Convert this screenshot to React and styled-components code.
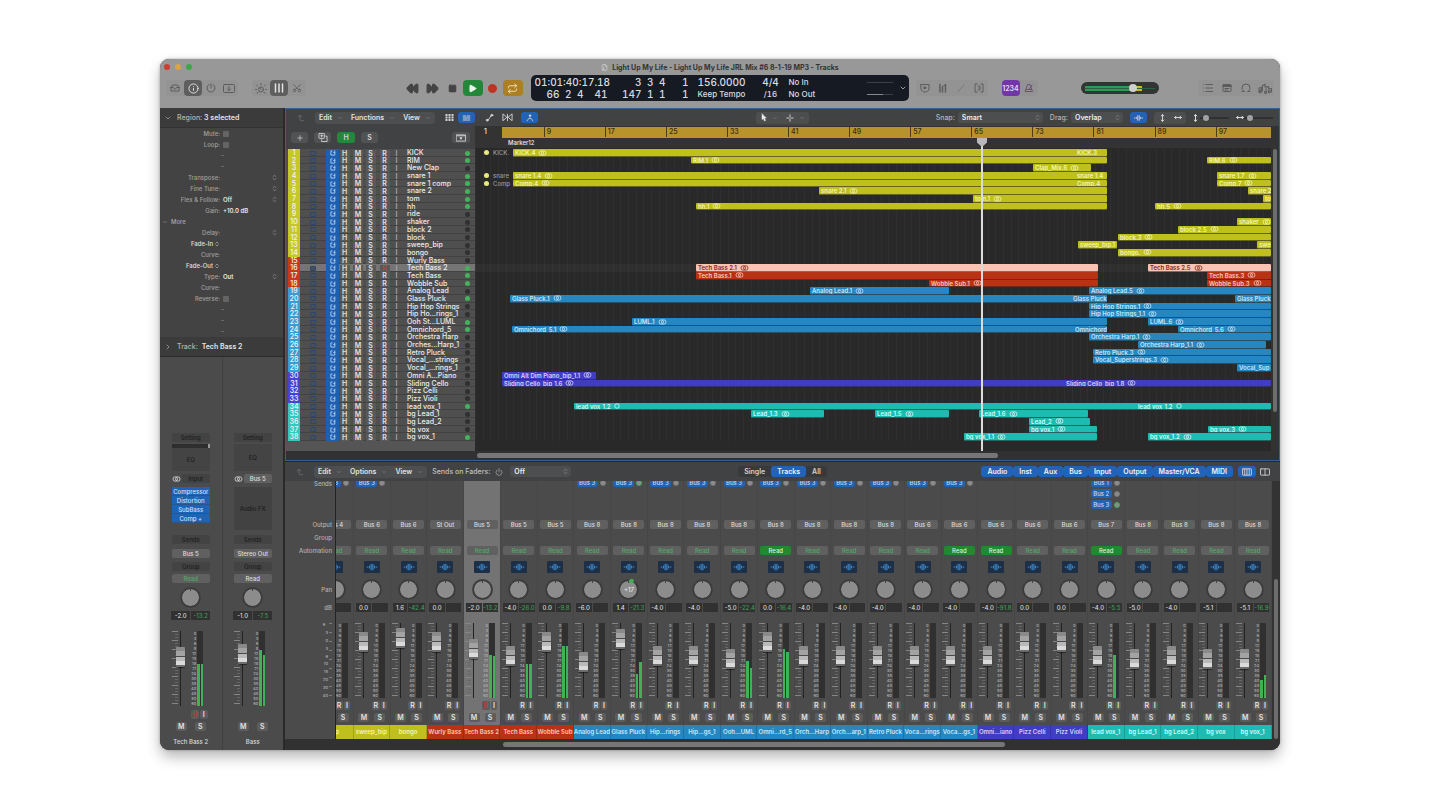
import { useState } from "react";
import styled, { createGlobalStyle } from "styled-components";
import {
  ChevronDown,
  ChevronRight,
  ChevronsUpDown,
  CornerLeftUp,
  FileMusic,
  Info,
  List,
  Plus,
  Power,
  Repeat,
  Scissors,
  Square,
  Play,
  Rewind,
  FastForward,
} from "lucide-react";

const GlobalStyle = createGlobalStyle`
* { box-sizing: border-box; }
body {
  margin: 0;
  background: #fff;
  font-family: Inter, "Liberation Sans", sans-serif;
  font-size: 7px;
  font-weight: 500;
  color: #dcdcdc;
}
button, select, input {
  font: inherit;
  color: inherit;
  margin: 0;
  padding: 0;
  border: 0;
}
`;

const COLORS = {
  yellow: { chip: "#c6c82a", region: "#bfc01e", text: "#f4f5b4" },
  red: { chip: "#c8381c", region: "#ba3214", text: "#f7c9bc" },
  pink: { chip: "#c8381c", region: "#fbc3b3", text: "#7d2d1d" },
  blue: { chip: "#3d9ad4", region: "#2686c0", text: "#c8e6f8" },
  purple: { chip: "#4a41d0", region: "#403cc4", text: "#d5d3fa" },
  teal: { chip: "#36c7be", region: "#1fbbb2", text: "#d3fbf5" },
};

/* width of the visible timeline, in the units that the regions below use */
const VIEW = 796;
const pct = (n) => `${(n / VIEW) * 100}%`;

const tracks = [
  ["KICK", "yellow", 1, [[38, 632, "KICK.4", [602, "KICK.3"]]], "KICK."],
  ["RIM", "yellow", 1, [[216, 632, "RIM.1"], [732, 796, "RIM.6"]]],
  ["New Clap", "yellow", 0, [[558, 616, "Clap_Mix.6"]]],
  ["snare 1", "yellow", 1, [[38, 632, "snare 1.4", [602, "snare 1.4"]], [742, 796, "snare 1.7"]], "snare"],
  ["snare 1 comp", "yellow", 1, [[38, 632, "Comp.4", [602, "Comp.4"]], [742, 796, "Comp.7"]], "Comp"],
  ["snare 2", "yellow", 1, [[344, 632, "snare 2.1"], [773, 796, "snare 2"]]],
  ["tom", "yellow", 1, [[498, 632, "tom.1"], [788, 796, "to"]]],
  ["hh", "yellow", 1, [[221, 632, "hh.1"], [680, 796, "hh.5"]]],
  ["ride", "yellow", 0, []],
  ["shaker", "yellow", 0, [[762, 796, "shaker"]]],
  ["block 2", "yellow", 0, [[703, 796, "block 2.5"]]],
  ["block", "yellow", 0, [[643, 796, "block.3"]]],
  ["sweep_bip", "yellow", 0, [[603, 642, "sweep_bip.1"], [782, 796, "swee"]]],
  ["bongo", "yellow", 0, [[643, 796, "bongo."]]],
  ["Wurly Bass", "red", 0, []],
  ["Tech Bass 2", "red", 1, [[221, 623, "Tech Bass 2.1", null, "pink"], [673, 796, "Tech Bass 2.5", null, "pink"]]],
  ["Tech Bass", "red", 1, [[221, 623, "Tech Bass.1"], [732, 796, "Tech Bass.3"]]],
  ["Wobble Sub", "red", 1, [[454, 623, "Wobble Sub.1"], [732, 796, "Wobble Sub.3"]]],
  ["Analog Lead", "blue", 0, [[335, 474, "Analog Lead.1"], [614, 796, "Analog Lead.5"]]],
  ["Glass Pluck", "blue", 1, [[35, 632, "Glass Pluck.1", [598, "Glass Pluck"]], [760, 796, "Glass Pluck"]]],
  ["Hip Hop Strings", "blue", 0, [[614, 796, "Hip Hop Strings.1"]]],
  ["Hip Ho...rings_1", "blue", 0, [[614, 796, "Hip Hop Strings_1.1"]]],
  ["Ooh St...LUML", "blue", 1, [[157, 632, "LUML.1"], [673, 796, "LUML.6"]]],
  ["Omnichord_5", "blue", 1, [[37, 632, "Omnichord_5.1", [600, "Omnichord"]], [703, 796, "Omnichord_5.6"]]],
  ["Orchestra Harp", "blue", 0, [[614, 796, "Orchestra Harp.1"]]],
  ["Orches...Harp_1", "blue", 0, [[663, 791, "Orchestra Harp_1.1"]]],
  ["Retro Pluck", "blue", 0, [[618, 796, "Retro Pluck.3"]]],
  ["Vocal_...strings", "blue", 0, [[618, 796, "Vocal_Superstrings.3"]]],
  ["Vocal_...rings_1", "blue", 0, [[762, 796, "Vocal_Sup"]]],
  ["Omni A...Piano", "purple", 0, [[27, 121, "Omni Alt Dim Piano_bip_1.1"]]],
  ["Sliding Cello", "purple", 0, [[27, 796, "Sliding Cello_bip_1.6", [591, "Sliding Cello_bip_1.8"]]]],
  ["Pizz Celli", "purple", 0, []],
  ["Pizz Violi", "purple", 0, []],
  ["lead vox_1", "teal", 1, [[99, 796, "lead vox_1.2", [663, "lead vox_1.2"]]]],
  ["bg Lead_1", "teal", 0, [[276, 349, "Lead_1.3"], [400, 474, "Lead_1.5"], [504, 613, "Lead_1.6"]]],
  ["bg Lead_2", "teal", 0, [[554, 615, "Lead_2"]]],
  ["bg vox", "teal", 0, [[554, 622, "bg vox.1"], [733, 796, "bg vox.3"]]],
  ["bg vox_1", "teal", 1, [[489, 622, "bg vox_1.1"], [673, 796, "bg vox_1.2"]]],
];

/* name, colour, output, volume, peak, meter [left, right] in %, sends, active automation */
const strips = [
  ["bip", "yellow", "Bus 4", "", "", [0, 0], ["Bus 3"]],
  ["sweep_bip", "yellow", "Bus 6", "0.0", "", [0, 0], ["Bus 3"]],
  ["bongo", "yellow", "Bus 6", "1.6", "-42.4", [0, 0], []],
  ["Wurly Bass", "red", "St Out", "0.0", "", [0, 0], []],
  ["Tech Bass 2", "red", "Bus 5", "-2.0", "-13.2", [57, 56], []],
  ["Tech Bass", "red", "Bus 5", "-4.0", "-26.0", [46, 46], []],
  ["Wobble Sub", "red", "Bus 5", "0.0", "-9.8", [70, 70], []],
  ["Analog Lead", "blue", "Bus 8", "-6.0", "", [0, 0], ["Bus 3"]],
  ["Glass Pluck", "blue", "Bus 8", "1.4", "-21.3", [32, 48], ["Bus 3"]],
  ["Hip...rings", "blue", "Bus 8", "-4.0", "", [0, 0], ["Bus 3"]],
  ["Hip...gs_1", "blue", "Bus 8", "-4.0", "", [0, 0], ["Bus 3"]],
  ["Ooh...UML", "blue", "Bus 8", "-5.0", "-22.4", [50, 40], ["Bus 3"]],
  ["Omni...rd_5", "blue", "Bus 8", "0.0", "-16.4", [65, 62], ["Bus 3"], true],
  ["Orch...Harp", "blue", "Bus 8", "-4.0", "", [0, 0], ["Bus 3"]],
  ["Orch...arp_1", "blue", "Bus 8", "-4.0", "", [0, 0], ["Bus 3"]],
  ["Retro Pluck", "blue", "Bus 8", "-4.0", "", [0, 0], ["Bus 3"]],
  ["Voca...rings", "blue", "Bus 6", "-4.0", "", [0, 0], ["Bus 3"]],
  ["Voca...gs_1", "blue", "Bus 6", "-4.0", "", [0, 0], ["Bus 3"], true],
  ["Omni...iano", "purple", "Bus 6", "-4.0", "-91.8", [0, 0], [], true],
  ["Pizz Celli", "purple", "Bus 6", "0.0", "", [0, 0], []],
  ["Pizz Violi", "purple", "Bus 6", "0.0", "", [0, 0], []],
  ["lead vox_1", "teal", "Bus 7", "-4.0", "-5.5", [58, 0], ["Bus 1", "Bus 2", "Bus 3"], true],
  ["bg Lead_1", "teal", "Bus 8", "-5.0", "", [0, 0], []],
  ["bg Lead_2", "teal", "Bus 8", "-4.0", "", [0, 0], []],
  ["bg vox", "teal", "Bus 8", "-5.1", "", [0, 0], []],
  ["bg vox_1", "teal", "Bus 8", "-5.1", "-16.9", [24, 31], []],
];

const bars = [9, 17, 25, 33, 41, 49, 57, 65, 73, 81, 89, 97];
const meterScale = [0, 3, 6, 9, 12, 15, 18, 21, 24, 30, 35, 40, 45, 50, 60];

const faderValue = (db) => {
  const v = Number(db || 0);
  return 83 + v * (v > 0 ? 5 : 6);
};

/* ---------- window ---------- */

const Page = styled.div`
  min-height: 100vh;
  padding: 59px 160px 60px;
`;

const Window = styled.main`
  display: flex;
  flex-direction: column;
  border-radius: 9px;
  overflow: hidden;
  background: #323232;
  box-shadow: 0 7px 14px rgba(0, 0, 0, 0.28), 0 0 3px rgba(0, 0, 0, 0.3);
`;

const TitleBar = styled.header`
  background: #989898;
  color: #333;
`;

const TitleRow = styled.div`
  display: grid;
  grid-template-columns: 1fr auto 1fr;
  align-items: center;
  height: 16px;
  padding: 0 4px;
`;

const Lights = styled.div`
  display: flex;
  gap: 5px;
`;

const Light = styled.button`
  width: 6px;
  height: 6px;
  border-radius: 50%;
  background: ${(p) => p.$color};
`;

const Title = styled.h1`
  display: flex;
  align-items: center;
  gap: 4px;
  margin: 0;
  font-size: 7px;
  font-weight: 700;
`;

const Toolbar = styled.div`
  display: grid;
  grid-template-columns: 1fr auto 1fr;
  align-items: center;
  height: 33px;
  padding: 0 6px 7px;
`;

const Group = styled.div`
  display: flex;
  align-items: center;
  gap: ${(p) => p.$gap || 0}px;
  justify-content: ${(p) => p.$justify || "flex-start"};
`;

const Well = styled.div`
  display: flex;
  border-radius: 4px;
  background: rgba(0, 0, 0, 0.03);
`;

const ToolButton = styled.button`
  display: flex;
  align-items: center;
  justify-content: center;
  width: ${(p) => p.$w || 18}px;
  height: 16px;
  border-radius: 4px;
  font-size: 7px;
  font-weight: 600;
  color: ${(p) => p.$color || "#5c5c5c"};
  background: ${(p) => p.$bg || "transparent"};
`;

const Lcd = styled.section`
  display: grid;
  grid-template-columns: 76px 80px 62px 36px 1fr auto auto;
  align-items: center;
  width: 378px;
  height: 26px;
  margin: 0 7px 0 8px;
  padding: 0 2px 0 4px;
  border-radius: 5px;
  background: #161b23;
  color: #d9dce0;
  font-size: 10px;
  font-variant-numeric: tabular-nums;
`;

const LcdCell = styled.div`
  display: flex;
  flex-direction: column;
  align-items: ${(p) => p.$align || "flex-start"};
  line-height: 12px;
  white-space: nowrap;

  small {
    font-size: 8px;
    line-height: 12px;
  }
`;

const Counter = styled.span`
  display: flex;
`;

const Digit = styled.span`
  width: ${(p) => p.$w}px;
  text-align: right;
`;

const LcdMeters = styled.div`
  display: flex;
  flex-direction: column;
  gap: 11px;
  margin-right: 6px;

  i {
    display: block;
    width: 26px;
    height: 1px;
    background: #3b4048;
  }
  i + i {
    background: linear-gradient(to right, #838890 60%, #3b4048 60%);
  }
`;

const MasterVolume = styled.input`
  appearance: none;
  width: 78px;
  height: 12px;
  margin-left: 43px;
  padding: 0 4px;
  border-radius: 6px;
  background: #333534;

  &::-webkit-slider-runnable-track {
    height: 5px;
    background: linear-gradient(transparent 2px, #26633e 2px 3px, transparent 3px),
      linear-gradient(to right, #2f9a56 72%, #cdb82b 72% 82%, #333534 82%);
  }
  &::-webkit-slider-thumb {
    appearance: none;
    width: 8px;
    height: 8px;
    margin-top: -2px;
    border-radius: 50%;
    background: #cfcfcf;
  }
`;

const Body = styled.div`
  display: grid;
  grid-template-columns: 125px minmax(0, 1fr);
`;

/* ---------- inspector ---------- */

const Inspector = styled.aside`
  background: #4b4b4b;
  border-right: 2px solid #2a2a2a;
`;

const InspectorHead = styled.h2`
  display: flex;
  align-items: center;
  gap: 5px;
  height: 20px;
  margin: 0;
  padding-left: 4px;
  background: #3b3b3b;
  border-bottom: 1px solid ${(p) => (p.$last ? "#2a2a2a" : "#333")};
  font-size: 7px;
  font-weight: 500;
  color: #b4b4b4;

  b {
    font-weight: 600;
    color: #e4e4e4;
  }
`;

const Params = styled.div`
  display: grid;
  grid-auto-rows: 11px;
  background: #434343;
`;

const Param = styled.label`
  display: grid;
  grid-template-columns: 60px 1fr 10px;
  align-items: center;
  gap: 3px;
  font-size: 6px;
  color: ${(p) => (p.$bright ? "#e0e0e0" : "#a0a0a0")};
  text-align: right;
  white-space: nowrap;
  padding-right: 2px;

  b {
    text-align: left;
    font-weight: 600;
    color: #e6e6e6;
  }
`;

const ParamLabel = styled.span`
  display: flex;
  align-items: center;
  justify-content: flex-end;
  gap: 1px;
`;

const Dash = styled.i`
  width: 3px;
  height: 1px;
  margin-left: -2px;
  background: #686868;
`;

const MoreRow = styled.button`
  display: flex;
  align-items: center;
  gap: 3px;
  padding-left: 2px;
  background: transparent;
  font-size: 6px;
  color: #a8a8a8;
`;

const Tick = styled.input`
  appearance: none;
  width: 6px;
  height: 6px;
  border-radius: 1px;
  background: #646464;
`;

const InspectorStrips = styled.div`
  display: grid;
  grid-template-columns: 1fr 1fr;
`;

const InspectorStrip = styled.section`
  display: grid;
  grid-template-columns: 40px;
  grid-template-rows: 74px 12px 29px 13px 47px 14px 14px 12px 13px 24px 13px 86px 12px 12px 18px;
  justify-content: center;
  align-items: center;
  justify-items: center;
  font-size: 6px;
  white-space: nowrap;

  & + & {
    border-left: 1px solid #404040;
  }
`;

const EqBox = styled.div`
  display: flex;
  flex-direction: column;
  width: 38px;
  height: 27px;
  background: #444;
  color: #1d1d1d;

  span {
    margin: auto;
  }
`;

const GainBar = styled.div`
  height: 4px;
  background: #2e2e2e;
  border-right: 2px solid #9a9a9a;
`;

const FxList = styled.div`
  display: flex;
  flex-direction: column;
  align-self: start;
  justify-content: ${(p) => (p.$empty ? "center" : "flex-start")};
  width: 38px;
  min-height: 43px;
  margin-top: 2px;
  background: ${(p) => (p.$empty ? "#424242" : "transparent")};
  color: #1d1d1d;
  text-align: center;
`;

const FxSlot = styled.button`
  height: 9px;
  background: #1f63b4;
  border-bottom: 1px solid #2c548a;
  color: #cfe0f4;
  font-size: 6px;
`;

const InputRow = styled.div`
  display: grid;
  grid-template-columns: 10px 28px;
  align-items: center;
`;

/* ---------- channel strip parts ---------- */

const StripButton = styled.button`
  width: ${(p) => p.$w || 31}px;
  height: 9px;
  border-radius: 2px;
  overflow: hidden;
  white-space: nowrap;
  font-size: 6px;
  line-height: 9px;
  background: ${(p) => (p.$on ? "#1f8a2e" : p.$dark ? "#434343" : "#606060")};
  color: ${(p) => (p.$dark ? "#1c1c1c" : p.$on ? "#d9f2da" : p.$green ? "#52a866" : "#dedede")};
`;

const FormatButton = styled.button`
  display: flex;
  align-items: center;
  justify-content: center;
  width: 16px;
  height: 12px;
  border-radius: 1px;
  background: #1c2f47;
  color: #3f8fd8;
`;

const Knob = styled.input`
  appearance: none;
  width: 19px;
  height: 19px;
  border: 1px solid #333;
  border-radius: 50%;
  background: linear-gradient(#444, #444) center top / 1px 2px no-repeat #8c8c8c;
  box-shadow: 0 0 0 1px #404040;

  &::-webkit-slider-thumb {
    appearance: none;
    width: 1px;
    height: 1px;
    background: transparent;
  }
`;

const KnobWrap = styled.div`
  position: relative;
  display: flex;
`;

const KnobValue = styled.span`
  position: absolute;
  inset: 6px 0 auto;
  text-align: center;
  font-size: 6px;
  color: #e8e8e8;

  &::before {
    content: "";
    position: absolute;
    left: 10px;
    top: -7px;
    width: 5px;
    height: 4px;
    border-radius: 2px;
    background: #3fae55;
  }
`;

const DbRow = styled.div`
  display: grid;
  grid-template-columns: 1fr 1fr;
  gap: 1px;
  width: ${(p) => p.$w || 32}px;
  height: 9px;
  font-size: 6px;
  line-height: 9px;
  text-align: center;

  span {
    display: flex;
    justify-content: center;
    background: #313131;
    white-space: nowrap;
  }
  span + span {
    color: #3f9b55;
  }
`;

const FaderArea = styled.div`
  display: grid;
  grid-template-columns: 6px 7px ${(p) => p.$gap || 4}px 6px 7px;
  align-self: end;
  height: 77px;
  margin-right: ${(p) => p.$shift || 0}px;
`;

const Ticks = styled.div`
  background: repeating-linear-gradient(#858585 0 1px, transparent 1px 9px) left / 6px 100% no-repeat,
    repeating-linear-gradient(#676767 0 1px, transparent 1px 3px) right / 3px 100% no-repeat;
  height: 75px;
`;

const Fader = styled.input`
  appearance: none;
  writing-mode: vertical-lr;
  direction: rtl;
  width: 9px;
  height: 75px;
  margin-left: -2px;
  background: linear-gradient(#222, #222) center / 1px 100% no-repeat;

  &::-webkit-slider-thumb {
    appearance: none;
    width: 9px;
    height: 20px;
    border-radius: 1px;
    background: linear-gradient(
      #8a8a8a 0 4px,
      #a3a3a3 4px 9px,
      #4a4a4a 9px 10px,
      #b9b9b9 10px 14px,
      #dadada 14px 18px,
      #6c6c6c 18px
    );
    box-shadow: 0 1px 1px rgba(0, 0, 0, 0.5);
  }
`;

const Scale = styled.div`
  grid-column: 4;
  display: flex;
  flex-direction: column;
  justify-content: space-between;
  height: 75px;
  font-size: 4px;
  line-height: 5px;
  color: #b0b0b0;
  text-align: right;
`;

const Meter = styled.div`
  display: flex;
  align-items: flex-end;
  gap: 1px;
  width: 6px;
  height: 75px;
  margin-left: 1px;
  background: #303030;

  i {
    flex: 1;
    background: #3fb257;
  }
`;

const RecRow = styled.div`
  display: flex;
  gap: 1px;
  justify-self: end;
  padding-right: 3px;
`;

const MiniButton = styled.button`
  width: ${(p) => p.$w || 11}px;
  height: 9px;
  border-radius: 2px;
  background: #5c5c5c;
  font-size: 7px;
  font-weight: 600;
  line-height: 9px;
  color: ${(p) => p.$color || "#e2e2e2"};
`;

const MuteRow = styled.div`
  display: flex;
  justify-content: center;
  gap: ${(p) => p.$gap || 5}px;
`;

/* ---------- arrange ---------- */

const Workspace = styled.div`
  min-width: 0;
`;

const Arrange = styled.section`
  border: 1px solid #3d5c96;
  background: #333;
`;

const Bar = styled.div`
  display: grid;
  grid-template-columns: 1fr auto 1fr;
  align-items: center;
  height: ${(p) => p.$h}px;
  padding: 0 6px;
  background: #404244;
`;

const MenuGroup = styled.div`
  display: flex;
  align-items: center;
  height: 12px;
  border-radius: 3px;
  background: #4c4e50;
`;

const MenuButton = styled.button`
  display: flex;
  align-items: center;
  gap: 5px;
  height: 12px;
  padding: 0 4px;
  background: transparent;
  font-size: 7px;
  font-weight: 600;
  color: #e2e2e2;

  svg {
    color: #8b8b8b;
  }
`;

const ToolMenu = styled(MenuButton)`
  svg:first-child {
    color: #eee;
  }
`;

const IconButton = styled.button`
  display: flex;
  align-items: center;
  justify-content: center;
  width: ${(p) => p.$w || 18}px;
  height: 11px;
  border-radius: 3px;
  background: ${(p) => p.$bg || "transparent"};
  color: ${(p) => p.$color || "#d4d4d4"};
  font-size: 7px;
  font-weight: 600;
`;

const SelectField = styled.label`
  display: grid;
  grid-template-columns: auto auto;
  align-items: center;
  gap: ${(p) => p.$gap || 3}px;
  font-size: 7px;
  color: #b4b4b4;
`;

const SelectBox = styled.span`
  display: grid;
  grid-template-columns: 1fr 9px;
  align-items: center;
  width: ${(p) => p.$w}px;
  height: 11px;
  border-radius: 3px;
  background: #4c4e50;
  color: #999;

  select {
    appearance: none;
    padding-left: 4px;
    background: transparent;
    font-weight: 600;
    color: #ececec;
    outline: 0;
  }
`;

const ZoomSlider = styled.input`
  appearance: none;
  width: 29px;
  height: 8px;
  background: linear-gradient(#303030, #303030) center / 100% 2px no-repeat;

  &::-webkit-slider-thumb {
    appearance: none;
    width: 6px;
    height: 6px;
    border-radius: 50%;
    background: #a2a2a2;
  }
`;

const ArrangeGrid = styled.div`
  display: grid;
  grid-template-columns: 189px minmax(0, 1fr) 8px;
`;

const ListHead = styled.div`
  display: flex;
  align-items: center;
  height: 23px;
  padding: 0 5px;
  background: #404244;
`;

const Spacer = styled.div`
  flex: 1;
`;

const TrackList = styled.div`
  display: grid;
  grid-auto-rows: 1fr;
  height: 292px;
  padding-left: 2px;
  background: #4f4f4f;
`;

const TrackRow = styled.div`
  display: grid;
  grid-template-columns: 12px 26px 13px 11px 16px 9px 19px 5px 1fr 15px;
  align-items: center;
  justify-items: center;
  min-height: 0;
  overflow: hidden;
  background: ${(p) => (p.$selected ? "#757575" : "transparent")};
  box-shadow: inset 0 -1px #424242;
`;

const TrackNumber = styled.span`
  width: 100%;
  background: ${(p) => p.$color};
  color: #f4f4f4;
  text-align: center;
  font-size: 7px;
  line-height: 8px;
`;

const TrackBadge = styled.button`
  width: 6px;
  height: 5px;
  border-radius: 1px;
  background: #4a4f57;
  border: 1px solid #2b4673;
`;

const LoopButton = styled.button`
  display: flex;
  align-items: center;
  justify-content: center;
  width: 100%;
  height: 8px;
  background: #1f5fb2;
  color: #b5d3f4;
`;

const TrackToggle = styled.button`
  width: 10px;
  height: 7px;
  background: ${(p) => (p.$dim ? "transparent" : "#595959")};
  font-size: 7px;
  font-weight: 600;
  line-height: 7px;
  color: ${(p) => p.$color || "#e0e0e0"};
`;

const TrackName = styled.span`
  justify-self: start;
  padding-left: 8px;
  font-size: 7px;
  line-height: 8px;
  white-space: nowrap;
  color: #ececec;
`;

const TrackDot = styled.i`
  width: 5px;
  height: 5px;
  border-radius: 50%;
  background: ${(p) => (p.$on ? "#43b25c" : "#303030")};
`;

const Filler = styled.div`
  height: 10px;
  background: ${(p) => p.$bg};
`;

const Timeline = styled.div`
  position: relative;
  overflow: hidden;
  background: #292929;
`;

const Ruler = styled.div`
  position: relative;
  height: 12px;
  background: #333;
  color: #e6e6e6;
  font-size: 7px;
  line-height: 11px;
  padding-left: 9px;
`;

const Cycle = styled.div`
  position: absolute;
  inset: 1px 0 0 ${pct(27)};
  background: #b8922b;
`;

const BarMark = styled.span`
  position: absolute;
  top: 1px;
  bottom: 1px;
  padding-left: 2px;
  border-left: 1px solid #4c3d14;
  color: #3a2f10;
  line-height: 9px;
`;

const MarkerLane = styled.div`
  height: 11px;
  padding-left: 33px;
  background: #333;
  border-bottom: 1px solid #2a2a2a;
  font-size: 6px;
  line-height: 10px;
  color: #efefef;
`;

const Lanes = styled.div`
  display: grid;
  grid-auto-rows: 1fr;
  height: 292px;
  background: repeating-linear-gradient(to right, #2f2f2f 0 1px, transparent 1px calc(100% / 104));
`;

const Lane = styled.div`
  position: relative;
  min-height: 0;
  background: ${(p) => (p.$selected ? "rgba(255, 255, 255, 0.03)" : "transparent")};
`;

const Region = styled.div`
  position: absolute;
  top: 0;
  bottom: 1px;
  overflow: hidden;
  border-radius: 1px;
  background: ${(p) => p.$tone.region};
  color: ${(p) => p.$tone.text};
  box-shadow: 0 1px ${(p) => p.$tone.region}66;
`;

const RegionLabel = styled.span`
  position: absolute;
  top: 0;
  left: 2px;
  display: flex;
  align-items: center;
  gap: 3px;
  font-size: 6px;
  font-weight: 600;
  line-height: 7px;
  white-space: nowrap;
`;

const LaneTake = styled.span`
  position: absolute;
  top: 0;
  left: 9px;
  display: flex;
  align-items: center;
  gap: 4px;
  font-size: 6px;
  line-height: 7px;
  color: #9b9b9b;

  &::before {
    content: "";
    width: 5px;
    height: 5px;
    border-radius: 50%;
    background: #e9ea7c;
  }
`;

const Playhead = styled.div`
  position: absolute;
  top: 12px;
  bottom: 0;
  width: 2px;
  margin-left: -1px;
  background: #dcdcdc;

  &::before {
    content: "";
    position: absolute;
    top: 0;
    left: -4px;
    width: 10px;
    height: 9px;
    background: #b9b9b9;
    clip-path: polygon(0 0, 100% 0, 100% 50%, 50% 100%, 0 50%);
  }
`;

const VScroll = styled.div`
  background: #333;
  padding: ${(p) => p.$top}px 2px 0 2px;

  i {
    display: block;
    height: ${(p) => p.$h}px;
    border-radius: 3px;
    background: #6d6d6d;
  }
`;

const HScroll = styled.div`
  display: grid;
  grid-template-columns: ${(p) => p.$cols};
  align-items: center;
  height: ${(p) => p.$h}px;
  background: #313131;

  i {
    grid-column: 2;
    height: 5px;
    border-radius: 3px;
    background: #767676;
  }
`;

/* ---------- mixer ---------- */

const Mixer = styled.section`
  border-top: 1px solid #23262c;
  background: #4b4b4b;
`;

const Segmented = styled.div`
  display: flex;
  border-radius: 3px;
  background: #38393a;
`;

const Segment = styled.button`
  height: 11px;
  padding: 0 ${(p) => p.$pad || 6}px;
  border-radius: 3px;
  background: ${(p) => (p.$on ? "#2263b8" : "transparent")};
  font-size: 7px;
  font-weight: 600;
  color: ${(p) => (p.$on ? "#f2f2f2" : "#d2d2d2")};
`;

const SendsLabel = styled.span`
  color: #c0c0c0;
`;

const MixerGrid = styled.div`
  display: grid;
  grid-template-columns: 51px minmax(0, 1fr) 8px;
`;

const stripRows = "37px 13px 13px 12px 21px 24px 12px 87px 11px 12px 16px";

const Labels = styled.div`
  display: grid;
  grid-template-rows: ${stripRows};
  align-items: center;
  justify-items: end;
  padding-right: 3px;
  border-right: 1px solid #242424;
  font-size: 6px;
  color: #b2b2b2;

  span:first-child {
    align-self: start;
    margin-top: -1px;
  }
`;

const VolumeScale = styled.div`
  display: flex;
  flex-direction: column;
  justify-content: space-between;
  align-self: end;
  height: 75px;
  margin-bottom: 2px;
  padding-right: 4px;
  font-size: 4px;
  line-height: 5px;
  text-align: right;
  background: repeating-linear-gradient(#7c7c7c 0 1px, transparent 1px 9px) right / 3px 100% no-repeat;
`;

const Strips = styled.div`
  display: grid;
  grid-template-columns: 18px repeat(25, minmax(0, 1fr));
  overflow: hidden;
`;

const StripClip = styled.div`
  display: flex;
  justify-content: flex-end;
  overflow: hidden;
`;

const Strip = styled.section`
  display: grid;
  grid-template-columns: 100%;
  grid-template-rows: ${stripRows};
  align-items: center;
  justify-items: center;
  flex: none;
  width: ${(p) => (p.$clipped ? "37px" : "auto")};
  min-width: 0;
  background: ${(p) => (p.$selected ? "#737373" : "transparent")};
  border-right: 1px solid #464646;
`;

const Sends = styled.div`
  display: grid;
  grid-auto-rows: 11px;
  align-self: start;
  width: 31px;
  height: 34px;
  overflow: hidden;
`;

const Send = styled.div`
  display: grid;
  grid-template-columns: 21px 8px;
  align-items: center;
  gap: 2px;
  margin-top: -4px;
  height: 11px;

  button {
    height: 9px;
    border-radius: 3px;
    background: #2263b3;
    color: #c7dbf2;
    font-size: 6px;
    line-height: 9px;
  }
  i {
    width: 6px;
    height: 6px;
    border: 1px solid ${(p) => (p.$green ? "#3fae55" : "#777")};
    border-radius: 50%;
    background: #8d8d8d;
  }
`;

const StripName = styled.div`
  align-self: end;
  width: calc(100% + 1px);
  height: 14px;
  overflow: hidden;
  background: ${(p) => p.$tone.region};
  color: ${(p) => p.$tone.text};
  font-size: 6px;
  font-weight: 600;
  line-height: 13px;
  text-align: center;
  white-space: nowrap;
  border-right: 1px solid rgba(0, 0, 0, 0.15);
`;

/* ---------- icons ---------- */

const Glyph = ({ w = 10, h = 10, box = "0 0 20 20", children, fill = "none" }) => (
  <svg width={w} height={h} viewBox={box} fill={fill} stroke="currentColor" strokeWidth="2" strokeLinecap="round" strokeLinejoin="round" aria-hidden="true">
    {children}
  </svg>
);

const StereoIcon = () => (
  <svg width="9" height="6" viewBox="0 0 18 12" fill="none" stroke="currentColor" strokeWidth="1.6" aria-hidden="true">
    <circle cx="6.5" cy="6" r="4.5" />
    <circle cx="11.5" cy="6" r="4.5" />
  </svg>
);

const MonoIcon = () => (
  <svg width="6" height="6" viewBox="0 0 12 12" fill="none" stroke="currentColor" strokeWidth="1.6" aria-hidden="true">
    <circle cx="6" cy="6" r="4.5" />
  </svg>
);

const TrayIcon = () => (
  <Glyph w={12}><path d="M2 9v7h16V9M2 9l3-5h10l3 5M2 9h5c0 4 6 4 6 0h5" /></Glyph>
);
const DialIcon = () => (
  <Glyph><path d="M6 3a8 8 0 1 0 8 0M10 2v8" /></Glyph>
);
const DownBoxIcon = () => (
  <Glyph w={12} h={9} box="0 0 24 18"><rect x="1" y="1" width="22" height="16" rx="2" /><path d="M12 5v8M9 10l3 3 3-3" /></Glyph>
);
const SmartIcon = () => (
  <Glyph w={12} h={11} box="0 0 24 22"><circle cx="12" cy="13" r="5" /><path d="M12 13l-3-3M12 1v3M3 4l2 2M21 4l-2 2M1 13h2M23 13h-2M4 20l2-1M20 20l-2-1" /></Glyph>
);
const FadersIcon = () => (
  <Glyph><path d="M3 2v16M10 2v16M17 2v16" strokeWidth="3" /></Glyph>
);
const ShieldIcon = () => (
  <Glyph><path d="M2 3h16v9c0 4-5 6-8 6s-8-2-8-6z" /><path d="M8 8v4l4-2z" fill="currentColor" /></Glyph>
);
const TunerIcon = () => (
  <Glyph w={8} box="2 0 16 20"><path d="M4 3v15M9 9v9M15 3v15" strokeWidth="3" /><path d="M9 7l6-3" /></Glyph>
);
const PencilIcon = () => (
  <Glyph><path d="M4 17L16 4" strokeWidth="1" /></Glyph>
);
const CountIcon = () => (
  <Glyph><path d="M6 2H2v16h4M14 2h4v16h-4" /><path d="M8 6h4v8H8M9 10h3" strokeWidth="1.6" /></Glyph>
);
const MetronomeIcon = () => (
  <Glyph><path d="M8 3h4l5 14H3zM5 13h10M10 13l6-9" /></Glyph>
);
const NotepadIcon = () => (
  <Glyph><rect x="2" y="3" width="16" height="14" rx="1" /><path d="M2 5h16M2 7h16M6 11h8M6 14h5" /></Glyph>
);
const LoopBrowserIcon = () => (
  <Glyph><path d="M2 17h5c-4-2-5-5-5-7a8 8 0 0 1 16 0c0 2-1 5-5 7h5" /></Glyph>
);
const MediaIcon = () => (
  <Glyph w={14} h={11} box="0 0 26 20"><path d="M2 16V9l4-1v8M8 14V5l5-3v4M13 7h7v5M15 17v-7M22 10h3v6" /><circle cx="4" cy="16" r="2" /><circle cx="14" cy="17" r="2" /><circle cx="21" cy="16" r="2" /></Glyph>
);
const GridIcon = () => (
  <Glyph w={9} h={9} box="0 0 18 18"><path d="M1 4h16M1 9h16M1 14h16" strokeWidth="4" strokeDasharray="4 2" strokeLinecap="butt" /></Glyph>
);
const PointerIcon = () => (
  <Glyph w={7} h={9} box="0 0 14 18" fill="currentColor"><path d="M4 2v11l3-2 2 5 2-1-2-5h3z" strokeWidth="1" /></Glyph>
);
const AutomationIcon = () => (
  <Glyph w={9} h={9}><path d="M3 16h4L14 5h4" /><circle cx="5" cy="16" r="2" fill="currentColor" /><circle cx="15" cy="5" r="2" fill="currentColor" /></Glyph>
);
const FlexIcon = () => (
  <Glyph w={11} h={9} box="0 0 24 18"><path d="M2 2v14l8-7zM22 2v14l-8-7zM12 2v14" /></Glyph>
);
const CatchIcon = () => (
  <Glyph w={8} h={8}><path d="M10 3v5M3 17l4-6h6l4 6" /><circle cx="10" cy="4" r="2" fill="currentColor" /></Glyph>
);
const OverviewIcon = () => (
  <Glyph w={9} h={8}><path d="M2 5h6M12 5h6M2 10h16M2 15h9M14 15h4" strokeWidth="3" /></Glyph>
);
const CopyIcon = () => (
  <Glyph w={10} h={9}><rect x="1" y="1" width="12" height="11" rx="1" /><path d="M7 15v4h12V7h-3M7 4v5M5 6h5" /></Glyph>
);
const HeaderBoxIcon = () => (
  <Glyph w={10} h={8} box="0 0 22 18"><rect x="1" y="2" width="20" height="14" /><path d="M1 4h20M9 9l2 3 2-3z" fill="currentColor" /></Glyph>
);
const CrossIcon = () => (
  <Glyph w={8} h={8}><path d="M10 2v5M10 13v5M2 10h5M13 10h5M10 10h0" /></Glyph>
);
const WaveIcon = ({ w = 10 }) => (
  <Glyph w={w} h={8} box="0 0 24 18"><path d="M1 9h1M6 7v4M10 3v12M14 3v12M18 7v4M22 9h1" strokeWidth="2.5" /></Glyph>
);
const HZoomIcon = () => (
  <Glyph w={8} h={5} box="0 0 24 14"><path d="M2 7h20M6 3L2 7l4 4M18 3l4 4-4 4" strokeWidth="3" /></Glyph>
);
const VZoomIcon = () => (
  <Glyph w={5} h={8} box="0 0 14 24"><path d="M7 2v20M3 6l4-4 4 4M3 18l4 4 4-4" strokeWidth="3" /></Glyph>
);
const LoopGlyph = () => (
  <Glyph w={8} h={6} box="0 0 24 20"><path d="M9 3H5v14h13V8M18 3v5h-4" strokeWidth="3" /></Glyph>
);
const ColumnsIcon = ({ n }) => (
  <Glyph w={10} h={8} box="0 0 22 18"><rect x="1" y="2" width="20" height="14" rx="1" />{n === 3 ? <path d="M6 2v14M11 2v14M16 2v14" /> : <path d="M11 2v14" />}</Glyph>
);

/* ---------- components ---------- */

function Select({ label, width, options, hideLabel, icon }) {
  return (
    <SelectField $gap={hideLabel ? 7 : 3}>
      {hideLabel ? icon : <span>{label}</span>}
      <SelectBox $w={width}>
        <select aria-label={label}>
          {options.map((o) => <option key={o}>{o}</option>)}
        </select>
        <ChevronsUpDown size={7} />
      </SelectBox>
    </SelectField>
  );
}

function Menus({ items }) {
  return (
    <MenuGroup>
      {items.map((item) => (
        <MenuButton key={item}>{item}<ChevronDown size={6} /></MenuButton>
      ))}
    </MenuGroup>
  );
}

function FaderBlock({ name, db, meter, gap, shift }) {
  return (
    <FaderArea $gap={gap} $shift={shift}>
      <Ticks />
      <Fader type="range" min="0" max="100" defaultValue={faderValue(db)} aria-label={`${name} volume`} />
      <Scale aria-hidden="true">{meterScale.map((n) => <span key={n}>{n}</span>)}</Scale>
      <Meter>
        {meter.map((level, i) => <i key={i} style={{ height: `${level}%` }} />)}
      </Meter>
    </FaderArea>
  );
}

function TopBar() {
  const [playing, setPlaying] = useState(true);
  return (
    <TitleBar>
      <TitleRow>
        <Lights>
          <Light $color="#c8402f" aria-label="Close" />
          <Light $color="#d9a441" aria-label="Minimise" />
          <Light $color="#3fa648" aria-label="Zoom" />
        </Lights>
        <Title><FileMusic size={7} color="#ddd" />Light Up My Life - Light Up My Life JRL Mix #6 8-1-19 MP3 - Tracks</Title>
      </TitleRow>
      <Toolbar>
        <Group $gap={14}>
          <Well>
            <ToolButton aria-label="Library"><TrayIcon /></ToolButton>
            <ToolButton aria-label="Inspector" $bg="#5e5e5e" $color="#e4e4e4"><Info size={11} /></ToolButton>
            <ToolButton aria-label="Quick help"><DialIcon /></ToolButton>
            <ToolButton aria-label="Toolbar"><DownBoxIcon /></ToolButton>
          </Well>
          <Well>
            <ToolButton aria-label="Smart controls"><SmartIcon /></ToolButton>
            <ToolButton aria-label="Mixer" $bg="#5e5e5e" $color="#e4e4e4"><FadersIcon /></ToolButton>
            <ToolButton aria-label="Editors"><Scissors size={10} style={{ rotate: "-90deg" }} /></ToolButton>
          </Well>
        </Group>
        <Group>
          <ToolButton $w={20} $color="#444" aria-label="Rewind"><Rewind size={13} fill="currentColor" /></ToolButton>
          <ToolButton $w={20} $color="#444" aria-label="Forward"><FastForward size={13} fill="currentColor" /></ToolButton>
          <ToolButton $w={20} $color="#444" aria-label="Stop"><Square size={9} fill="currentColor" /></ToolButton>
          <ToolButton $w={20} $bg="#23873a" $color="#e9f5ea" aria-label="Play" onClick={() => setPlaying(!playing)}>
            <Play size={9} fill={playing ? "currentColor" : "none"} />
          </ToolButton>
          <ToolButton $w={20} $color="#bd3522" aria-label="Record"><Glyph w={9} h={9} fill="currentColor"><circle cx="10" cy="10" r="9" /></Glyph></ToolButton>
          <ToolButton $w={20} $bg="#ab7f22" $color="#f4e6c0" aria-label="Cycle"><Repeat size={11} /></ToolButton>
          <Lcd>
            <LcdCell>
              <span>01:01:40:17.18</span>
              <Counter><Digit $w={25}>66</Digit><Digit $w={12}>2</Digit><Digit $w={12}>4</Digit><Digit $w={24}>41</Digit></Counter>
            </LcdCell>
            <LcdCell>
              <Counter><Digit $w={31}>3</Digit><Digit $w={12}>3</Digit><Digit $w={12}>4</Digit><Digit $w={23}>1</Digit></Counter>
              <Counter><Digit $w={31}>147</Digit><Digit $w={12}>1</Digit><Digit $w={12}>1</Digit><Digit $w={23}>1</Digit></Counter>
            </LcdCell>
            <LcdCell $align="center"><span>156.0000</span><small>Keep Tempo</small></LcdCell>
            <LcdCell $align="center"><span>4/4</span><small>/16</small></LcdCell>
            <LcdCell><small>No In</small><small>No Out</small></LcdCell>
            <LcdMeters><i /><i /></LcdMeters>
            <ChevronDown size={8} />
          </Lcd>
          <Group $gap={14}>
            <Well>
              <ToolButton aria-label="Replace"><ShieldIcon /></ToolButton>
              <ToolButton aria-label="Tuner"><TunerIcon /></ToolButton>
              <ToolButton aria-label="Solo"><PencilIcon /></ToolButton>
              <ToolButton aria-label="Low latency"><CountIcon /></ToolButton>
            </Well>
            <Well>
              <ToolButton $bg="#7236a8" $color="#eadcf7">1234</ToolButton>
              <ToolButton $color="#6a5080" aria-label="Metronome"><MetronomeIcon /></ToolButton>
            </Well>
          </Group>
        </Group>
        <Group $justify="space-between">
          <MasterVolume type="range" defaultValue="72" aria-label="Master volume" />
          <Well>
            <ToolButton $w={19} aria-label="Lists"><List size={12} /></ToolButton>
            <ToolButton $w={19} aria-label="Notes"><NotepadIcon /></ToolButton>
            <ToolButton $w={19} aria-label="Loops"><LoopBrowserIcon /></ToolButton>
            <ToolButton $w={19} aria-label="Media"><MediaIcon /></ToolButton>
          </Well>
        </Group>
      </Toolbar>
    </TitleBar>
  );
}

const params = [
  ["Mute:", "check"],
  ["Loop:", "check"],
  ["", "-"],
  ["", "-"],
  ["Transpose:", "", true],
  ["Fine Tune:", "", true],
  ["Flex & Follow:", "Off", true],
  ["Gain:", "+10.0 dB"],
  ["More"],
  ["Delay:", "", true],
  ["Fade-In"],
  ["Curve:", ""],
  ["Fade-Out"],
  ["Type:", "Out", true],
  ["Curve:", ""],
  ["Reverse:", "check"],
  ["", "-"],
  ["", "-"],
  ["", "-"],
];

function ParamRow({ label, value, stepper }) {
  if (label === "More") {
    return <MoreRow><ChevronDown size={6} />More</MoreRow>;
  }
  const fade = label.startsWith("Fade");
  return (
    <Param as={value === "check" ? "label" : "div"} $bright={fade}>
      <ParamLabel>{label}{fade && <ChevronsUpDown size={6} />}</ParamLabel>
      {value === "check" && <Tick type="checkbox" />}
      {value === "-" && <Dash />}
      {value !== "check" && value !== "-" && <b>{value}</b>}
      {stepper && <ChevronsUpDown size={7} />}
    </Param>
  );
}

function InspectorChannel({ name, input, fx, output, db, peak, meter, armed }) {
  return (
    <InspectorStrip>
      <span />
      <StripButton $w={38} $dark>Setting</StripButton>
      <EqBox>{armed && <GainBar />}<span>EQ</span></EqBox>
      <InputRow><StereoIcon /><StripButton $w={28} $dark={armed}>{input}</StripButton></InputRow>
      <FxList $empty={!fx.length}>
        {fx.length ? fx.map((f) => <FxSlot key={f}>{f}</FxSlot>) : "Audio FX"}
      </FxList>
      <StripButton $w={38} $dark>Sends</StripButton>
      <StripButton $w={38}>{output}</StripButton>
      <StripButton $w={38} $dark>Group</StripButton>
      <StripButton $w={38} $green={armed}>Read</StripButton>
      <Knob type="range" aria-label={`${name} pan`} />
      <DbRow $w={39}><span>{db}</span><span>{peak}</span></DbRow>
      <FaderBlock name={name} db={db} meter={meter} gap={5} shift={6} />
      {armed ? (
        <RecRow><MiniButton $w={8} $color="#b83434">R</MiniButton><MiniButton $w={8}>I</MiniButton></RecRow>
      ) : <span />}
      <MuteRow $gap={8}><MiniButton>M</MiniButton><MiniButton>S</MiniButton></MuteRow>
      <span>{name}</span>
    </InspectorStrip>
  );
}

function ArrangePanel() {
  const selected = 15;
  return (
    <Arrange>
      <Bar $h={17}>
        <Group $gap={5}>
          <IconButton $color="#777" aria-label="Up"><CornerLeftUp size={8} /></IconButton>
          <Menus items={["Edit", "Functions", "View"]} />
          <Group>
            <IconButton aria-label="Grid"><GridIcon /></IconButton>
            <IconButton $w={17} $bg="#2263b8" aria-label="Regions"><OverviewIcon /></IconButton>
          </Group>
          <Group>
            <IconButton aria-label="Automation"><AutomationIcon /></IconButton>
            <IconButton aria-label="Flex"><FlexIcon /></IconButton>
          </Group>
          <IconButton $w={17} $bg="#2263b8" aria-label="Catch"><CatchIcon /></IconButton>
        </Group>
        <MenuGroup>
          <ToolMenu aria-label="Pointer tool"><PointerIcon /><ChevronDown size={6} /></ToolMenu>
          <ToolMenu aria-label="Marquee tool"><CrossIcon /><ChevronDown size={6} /></ToolMenu>
        </MenuGroup>
        <Group $gap={7} $justify="flex-end">
          <Select label="Snap:" width={85} options={["Smart", "Bar", "Beat"]} />
          <Select label="Drag:" width={52} options={["Overlap", "No Overlap"]} />
          <IconButton $w={17} $bg="#2263b8" aria-label="Waveform zoom"><WaveIcon w={9} /></IconButton>
          <MenuGroup>
            <IconButton $w={16} aria-label="Vertical auto zoom"><VZoomIcon /></IconButton>
            <IconButton $w={16} aria-label="Horizontal auto zoom"><HZoomIcon /></IconButton>
          </MenuGroup>
          <Group $gap={2}><VZoomIcon /><ZoomSlider type="range" defaultValue="15" aria-label="Vertical zoom" /></Group>
          <Group><HZoomIcon /><ZoomSlider type="range" defaultValue="12" aria-label="Horizontal zoom" /></Group>
        </Group>
      </Bar>
      <ArrangeGrid>
        <div>
          <ListHead>
            <Group $gap={6}>
              <IconButton $w={17} $bg="#505254" aria-label="Add track"><Plus size={8} /></IconButton>
              <IconButton $w={17} $bg="#505254" aria-label="Duplicate track"><CopyIcon /></IconButton>
              <IconButton $w={18} $bg="#23883a">H</IconButton>
              <IconButton $w={17} $bg="#505254">S</IconButton>
            </Group>
            <Spacer />
            <IconButton $bg="#505254" aria-label="Track header"><HeaderBoxIcon /></IconButton>
          </ListHead>
          <TrackList>
            {tracks.map(([name, color, on], i) => (
              <TrackRow key={name} $selected={i === selected}>
                <TrackNumber $color={COLORS[color].chip}>{i + 1}</TrackNumber>
                <TrackBadge aria-label={`${name} group`} />
                <LoopButton aria-label={`${name} power`}><LoopGlyph /></LoopButton>
                <TrackToggle>H</TrackToggle>
                <TrackToggle>M</TrackToggle>
                <TrackToggle>S</TrackToggle>
                <TrackToggle $color={i === selected ? "#b04a44" : undefined}>R</TrackToggle>
                <TrackToggle $color="#a8a8a8" $dim>I</TrackToggle>
                <TrackName>{name}</TrackName>
                <TrackDot $on={on} />
              </TrackRow>
            ))}
          </TrackList>
          <Filler $bg="#555" />
        </div>
        <Timeline>
          <Ruler>
            1
            <Cycle />
            {bars.map((n) => (
              <BarMark key={n} style={{ left: `${(n / 104.25) * 100}%` }}>{n}</BarMark>
            ))}
          </Ruler>
          <MarkerLane>Marker12</MarkerLane>
          <Lanes>
            {tracks.map(([name, color, , regions, take], i) => (
              <Lane key={name} $selected={i === selected}>
                {take && <LaneTake>{take}</LaneTake>}
                {regions.map(([from, to, label, tail, own]) => {
                  const Channels = label.startsWith("lead vox") ? MonoIcon : StereoIcon;
                  return (
                    <Region key={from} $tone={COLORS[own || color]} style={{ left: pct(from), width: pct(to - from) }}>
                      <RegionLabel>{label}<Channels /></RegionLabel>
                      {tail && (
                        <RegionLabel style={{ left: `${((tail[0] - from) / (to - from)) * 100}%` }}>
                          {tail[1]}{to === VIEW && <Channels />}
                        </RegionLabel>
                      )}
                    </Region>
                  );
                })}
              </Lane>
            ))}
          </Lanes>
          <Playhead style={{ left: pct(507) }} />
        </Timeline>
        <VScroll $top={23} $h={263}><i /></VScroll>
      </ArrangeGrid>
      <HScroll $h={9} $cols="191px 52.5% 1fr"><i /></HScroll>
    </Arrange>
  );
}

function MixerStrip({ data, selected, clipped }) {
  const [name, color, output, db, peak, meter, sends, active] = data;
  return (
    <Strip $selected={selected} $clipped={clipped}>
      <Sends>
        {sends.map((s, i) => (
          <Send key={s} $green={i === 2 || name === "Glass Pluck"}><button>{s}</button><i /></Send>
        ))}
      </Sends>
      <StripButton>{output}</StripButton>
      <span />
      <StripButton $green $on={active}>Read</StripButton>
      <FormatButton aria-label={`${name} format`}><WaveIcon w={12} /></FormatButton>
      <KnobWrap>
        <Knob type="range" aria-label={`${name} pan`} />
        {name === "Glass Pluck" && <KnobValue>+17</KnobValue>}
      </KnobWrap>
      <DbRow><span>{db}</span><span>{peak}</span></DbRow>
      <FaderBlock name={name} db={db} meter={meter} shift={4} />
      <RecRow>
        <MiniButton $w={8} $color={selected ? "#c23a34" : undefined}>R</MiniButton>
        <MiniButton $w={6}>I</MiniButton>
      </RecRow>
      <MuteRow><MiniButton>M</MiniButton><MiniButton>S</MiniButton></MuteRow>
      <StripName $tone={COLORS[color]}>{name}</StripName>
    </Strip>
  );
}

function MixerPanel() {
  const [view, setView] = useState("Tracks");
  const kinds = ["Audio", "Inst", "Aux", "Bus", "Input", "Output", "Master/VCA", "MIDI"];
  return (
    <Mixer>
      <Bar $h={19}>
        <Group $gap={5}>
          <IconButton $color="#777" aria-label="Up"><CornerLeftUp size={8} /></IconButton>
          <Menus items={["Edit", "Options", "View"]} />
          <SendsLabel>Sends on Faders:</SendsLabel>
          <Select label="Sends on Faders" hideLabel icon={<Power size={8} />} width={61} options={["Off", "Bus 1", "Bus 3"]} />
        </Group>
        <Segmented>
          {["Single", "Tracks", "All"].map((v) => (
            <Segment key={v} $on={v === view} onClick={() => setView(v)}>{v}</Segment>
          ))}
        </Segmented>
        <Group $gap={5} $justify="flex-end">
          <Segmented>
            {kinds.map((k) => <Segment key={k} $on $pad={6}>{k}</Segment>)}
          </Segmented>
          <Group>
            <IconButton $bg="#2263b8" aria-label="Narrow strips"><ColumnsIcon n={3} /></IconButton>
            <IconButton aria-label="Wide strips"><ColumnsIcon n={2} /></IconButton>
          </Group>
        </Group>
      </Bar>
      <MixerGrid>
        <Labels>
          <span>Sends</span>
          <span>Output</span>
          <span>Group</span>
          <span>Automation</span>
          <span />
          <span>Pan</span>
          <span>dB</span>
          <VolumeScale aria-hidden="true">
            {[6, 3, 0, 3, 6, 10, 15, 20, 30, 40].map((n, i) => <span key={i}>{n}</span>)}
          </VolumeScale>
        </Labels>
        <Strips>
          <StripClip><MixerStrip data={strips[0]} clipped /></StripClip>
          {strips.slice(1).map((s) => (
            <MixerStrip key={s[0]} data={s} selected={s[0] === "Tech Bass 2"} />
          ))}
        </Strips>
        <VScroll $top={98} $h={160}><i /></VScroll>
      </MixerGrid>
      <HScroll $h={11} $cols="218px 50.5% 1fr"><i /></HScroll>
    </Mixer>
  );
}

function App() {
  return (
    <Page>
      <GlobalStyle />
      <Window>
        <TopBar />
        <Body>
          <Inspector>
            <InspectorHead><ChevronDown size={8} /><span>Region: <b>3 selected</b></span></InspectorHead>
            <Params>
              {params.map(([label, value, stepper], i) => (
                <ParamRow key={i} label={label} value={value} stepper={stepper} />
              ))}
            </Params>
            <InspectorHead $last><ChevronRight size={8} /><span>Track:&nbsp; <b>Tech Bass 2</b></span></InspectorHead>
            <InspectorStrips>
              <InspectorChannel name="Tech Bass 2" input="Input" fx={["Compressor", "Distortion", "SubBass", "Comp +"]} output="Bus 5" db="-2.0" peak="-13.2" meter={[56, 56]} armed />
              <InspectorChannel name="Bass" input="Bus 5" fx={[]} output="Stereo Out" db="-1.0" peak="-7.5" meter={[75, 68]} />
            </InspectorStrips>
          </Inspector>
          <Workspace>
            <ArrangePanel />
            <MixerPanel />
          </Workspace>
        </Body>
      </Window>
    </Page>
  );
}

export default App;
